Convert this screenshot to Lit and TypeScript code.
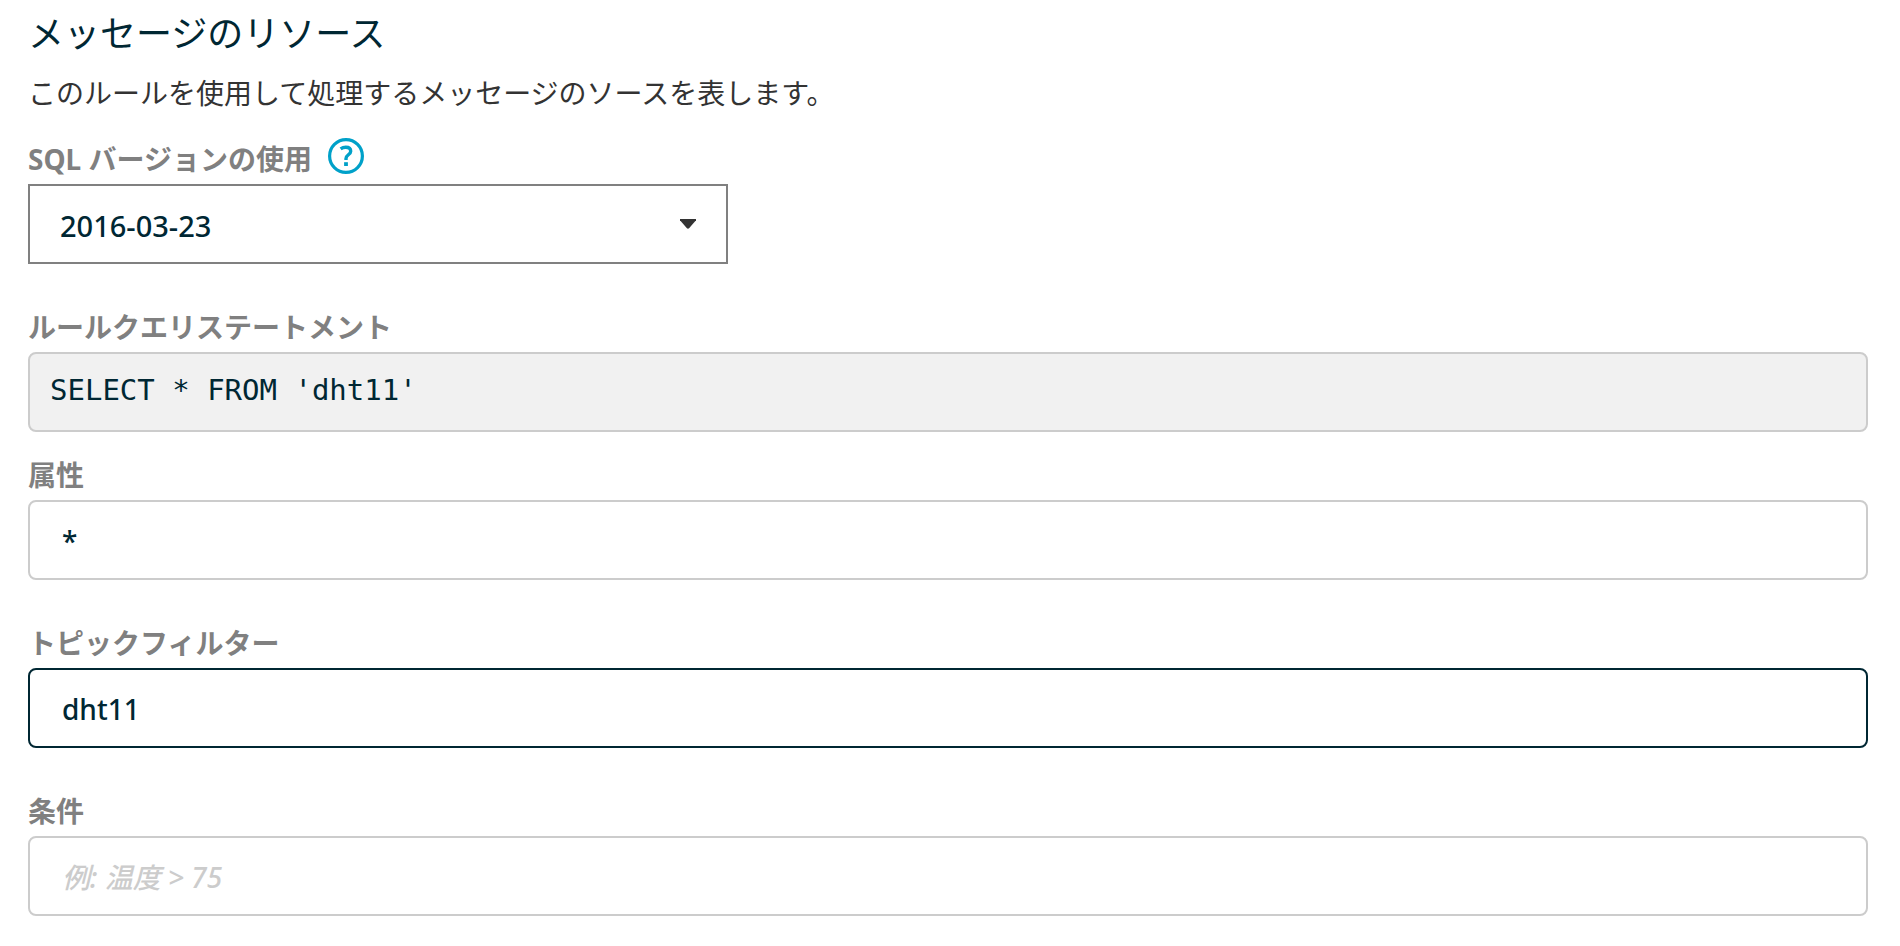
import { LitElement, html, css } from "lit";
import { customElement, property, state } from "lit/decorators.js";

@customElement("form-field")
class FormField extends LitElement {
  @property() label = "";
  @property() name = "";
  @property() value = "";
  @property() hint = "";
  @property({ type: Boolean }) active = false;

  static styles = css`
    :host {
      display: block;
    }
    .label {
      display: block;
      margin-bottom: 2px;
      font-weight: 700;
      line-height: 46px;
      color: #808080;
    }
    .input {
      display: block;
      box-sizing: border-box;
      width: 100%;
      height: 80px;
      padding: 2px 32px 0;
      border: 2px solid #ccc;
      border-radius: 8px;
      background: #fff;
      color: #002733;
      font: inherit;
      font-weight: 500;
      outline: none;
    }
    .input.active,
    .input:focus {
      border-color: #002733;
    }
    .input::placeholder {
      color: #ccc;
      font-style: italic;
      opacity: 1;
    }
  `;

  private onInput(e: Event) {
    this.value = (e.target as HTMLInputElement).value;
    this.dispatchEvent(new CustomEvent("field-change", { detail: this.value }));
  }

  render() {
    return html`
      <label class="label" for=${this.name}>${this.label}</label>
      <input
        class=${this.active ? "input active" : "input"}
        id=${this.name}
        type="text"
        .value=${this.value}
        placeholder=${this.hint}
        @input=${this.onInput}
      />
    `;
  }
}

@customElement("app-root")
class AppRoot extends LitElement {
  @state() private attribute = "*";
  @state() private topic = "dht11";
  @state() private condition = "";

  static styles = css`
    :host {
      display: block;
      padding: 10px 32px 30px 28px;
      background: #fff;
      color: #002733;
      font-family: "Noto Sans", "Noto Sans CJK JP", sans-serif;
      font-size: 28px;
    }
    .title {
      margin: 0;
      font-size: 36px;
      font-weight: 400;
      line-height: 48px;
    }
    .intro {
      margin: 13px 0 21px;
      line-height: 44px;
      color: #333;
    }
    .fields {
      display: flex;
      flex-direction: column;
      gap: 40px;
    }
    .query {
      display: flex;
      flex-direction: column;
      gap: 20px;
    }
    .label-row {
      display: flex;
      align-items: flex-start;
      gap: 16px;
      margin-bottom: 2px;
    }
    .label {
      font-weight: 700;
      line-height: 46px;
      color: #808080;
    }
    .help {
      display: block;
      padding: 2px 0;
      border: 0;
      background: none;
      cursor: pointer;
    }
    .help-icon {
      display: block;
      width: 36px;
      height: 36px;
    }
    .picker {
      display: grid;
      align-items: center;
      max-width: 700px;
    }
    .select {
      grid-area: 1 / 1;
      box-sizing: border-box;
      width: 100%;
      height: 80px;
      padding: 2px 30px 0;
      border: 2px solid #808080;
      border-radius: 0;
      background: #fff;
      color: inherit;
      font: inherit;
      font-size: 29px;
      font-weight: 500;
      appearance: none;
    }
    .caret {
      grid-area: 1 / 1;
      justify-self: end;
      width: 16px;
      height: 10px;
      margin-right: 32px;
      pointer-events: none;
    }
    .statement-label {
      margin: 0 0 2px;
      font-size: 28px;
    }
    .statement {
      box-sizing: border-box;
      margin: 0;
      padding: 18px 20px 22px;
      border: 2px solid #ccc;
      border-radius: 8px;
      background: #f1f1f1;
      font-family: "DejaVu Sans Mono", monospace;
      font-size: 29px;
      line-height: 36px;
      white-space: pre-wrap;
    }
  `;

  private get statement() {
    const where = this.condition ? ` WHERE ${this.condition}` : "";
    return `SELECT ${this.attribute} FROM '${this.topic}'${where}`;
  }

  render() {
    return html`
      <h2 class="title">メッセージのリソース</h2>
      <p class="intro">このルールを使用して処理するメッセージのソースを表します。</p>
      <div class="fields">
        <div>
          <div class="label-row">
            <label class="label" for="version">SQL バージョンの使用</label>
            <button class="help" type="button" aria-label="ヘルプ">
              <svg class="help-icon" viewBox="0 0 36 36" fill="none" stroke="#00a1c9">
                <circle cx="18" cy="18" r="16.4" stroke-width="3.2" />
                <path
                  d="M12.6 10.9c1.6-1.1 3.4-1.6 5.2-1.6 3.2 0 4.9 1.6 4.9 3.9 0 3.5-4.7 3.6-4.7 7.2v1.6"
                  stroke-width="3.4"
                />
                <path d="M18 24.2v3.8" stroke-width="3.8" />
              </svg>
            </button>
          </div>
          <div class="picker">
            <select class="select" id="version">
              <option>2016-03-23</option>
            </select>
            <svg class="caret" viewBox="0 0 16 10" fill="#333">
              <path d="M0 0h16v1.2L9.3 9Q8 10.4 6.7 9L0 1.2z" />
            </svg>
          </div>
        </div>
        <div class="query">
          <section>
            <h3 class="label statement-label">ルールクエリステートメント</h3>
            <pre class="statement">${this.statement}</pre>
          </section>
          <form-field
            label="属性"
            name="attribute"
            .value=${this.attribute}
            @field-change=${(e: CustomEvent) => (this.attribute = e.detail)}
          ></form-field>
        </div>
        <form-field
          label="トピックフィルター"
          name="topic"
          active
          .value=${this.topic}
          @field-change=${(e: CustomEvent) => (this.topic = e.detail)}
        ></form-field>
        <form-field
          label="条件"
          name="condition"
          hint="例: 温度 &gt; 75"
          .value=${this.condition}
          @field-change=${(e: CustomEvent) => (this.condition = e.detail)}
        ></form-field>
      </div>
    `;
  }
}
